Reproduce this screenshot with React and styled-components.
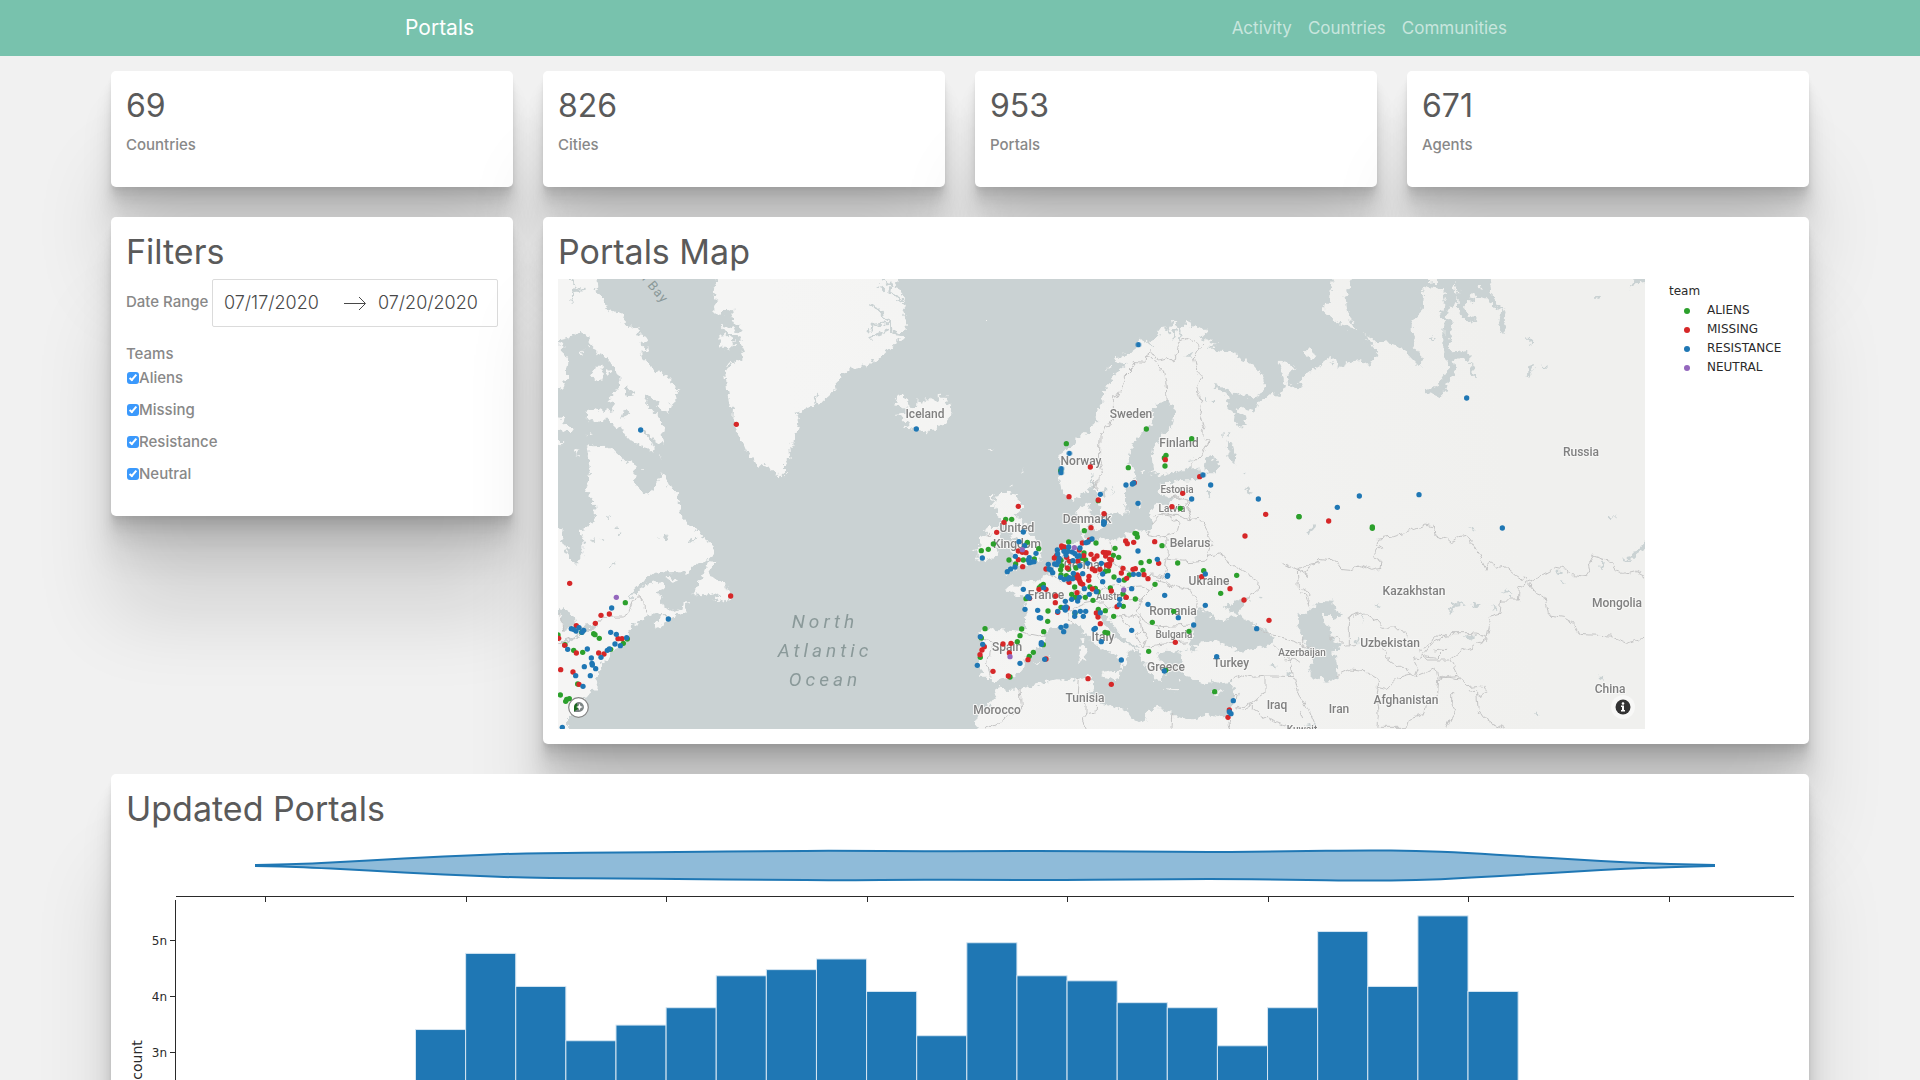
import React from 'react';
import styled, { createGlobalStyle } from 'styled-components';

const GlobalStyle = createGlobalStyle`
  *, *::before, *::after { box-sizing: border-box; }
  body {
    margin: 0;
    background: #f1f1f1;
    color: #888;
    font: 500 15px/24px Inter, "Liberation Sans", sans-serif;
  }
`;

const TEAM_COLORS = {
  ALIENS: '#2ca02c',
  MISSING: '#d62728',
  RESISTANCE: '#1f77b4',
  NEUTRAL: '#9467bd',
};

/* ---------- layout ---------- */

const Header = styled.header`
  background: #78c2ad;
`;

const HeaderInner = styled.div`
  display: flex;
  align-items: center;
  justify-content: space-between;
  max-width: 1140px;
  height: 56px;
  margin: 0 auto;
  padding: 0 15px;
`;

const Brand = styled.a`
  color: #fff;
  font-size: 21px;
  font-weight: 400;
  text-decoration: none;
`;

const Nav = styled.nav`
  display: flex;
`;

const NavLink = styled.a`
  padding: 8px;
  color: rgba(255, 255, 255, 0.6);
  font-size: 17px;
  font-weight: 400;
  text-decoration: none;
`;

const Grid = styled.main`
  display: grid;
  grid-template-columns: repeat(4, minmax(0, 1fr));
  align-items: start;
  gap: 30px;
  margin: 0 5%;
  padding: 15px;
`;

const Card = styled.section`
  grid-column: span ${(p) => p.$span || 1};
  padding: 15px;
  border-radius: 5px;
  background: #fff;
  box-shadow:
    0 3px 2px rgba(0, 0, 0, 0.034),
    0 7px 5px rgba(0, 0, 0, 0.048),
    0 13px 10px rgba(0, 0, 0, 0.06),
    0 22px 18px rgba(0, 0, 0, 0.072),
    0 42px 33px rgba(0, 0, 0, 0.086),
    0 100px 80px rgba(0, 0, 0, 0.12);
`;

const Title = styled.h2`
  margin: 0 0 8px;
  color: #5a5a5a;
  font-size: 34px;
  font-weight: 400;
  line-height: 39px;
`;

const StatValue = styled(Title)`
  font-size: 32px;
`;

const StatLabel = styled.p`
  margin: 0 0 15px;
`;

/* ---------- filters ---------- */

const DateRow = styled.div`
  display: flex;
  margin-bottom: 15px;
`;

const DateLabel = styled.label`
  flex: 1;
  white-space: nowrap;
  line-height: 45px;
`;

const DateBox = styled.div`
  display: flex;
  align-items: center;
  height: 48px;
  border: 1px solid #dbdbdb;
  border-radius: 2px;
  background: #fff;
`;

const DateInput = styled.input`
  width: 130px;
  padding: 0 11px;
  border: 0;
  background: transparent;
  color: #484848;
  font: 300 18px/24px Inter, sans-serif;
`;

const Teams = styled.fieldset`
  display: grid;
  gap: 8px;
  margin: 0 0 15px;
  padding: 0;
  border: 0;
`;

const Legend = styled.legend`
  padding: 0;
`;

const Check = styled.label`
  display: flex;
  align-items: center;
`;

const CheckBox = styled.input`
  display: grid;
  justify-content: center;
  width: 12px;
  height: 12px;
  margin: 0 0 0 1px;
  border-radius: 3px;
  background: #fff;
  box-shadow: inset 0 0 0 1px #bbb;
  appearance: none;
  &:checked {
    background: #3b99fc;
    box-shadow: none;
  }
  &:checked::after {
    content: '';
    width: 4px;
    height: 8px;
    margin-top: 1px;
    border: solid #fff;
    border-width: 0 2px 2px 0;
    transform: rotate(40deg);
  }
`;

/* ---------- map ---------- */

const MapRow = styled.div`
  display: flex;
`;

const MapFrame = styled.div`
  position: relative;
  flex: 1;
  min-width: 0;
  height: 450px;
`;

const MapSvg = styled.svg`
  display: block;
  width: 100%;
  height: 100%;
  background: #cad2d3;
`;

const MapLabel = styled.text`
  fill: #808080;
  stroke: #f7f7f6;
  stroke-width: 2px;
  stroke-linejoin: round;
  paint-order: stroke;
  text-anchor: middle;
  font: 500 ${(p) => (p.$small ? 10 : 12)}px Roboto, sans-serif;
`;

const SeaLabel = styled.text`
  fill: #8a9999;
  text-anchor: middle;
  font: italic 400 19px Roboto, sans-serif;
  letter-spacing: 4px;
`;

const BayLabel = styled.text`
  fill: #8a9999;
  font: 400 13px Roboto, sans-serif;
  letter-spacing: 1px;
`;

const MapLogo = styled.a`
  position: absolute;
  left: 10px;
  bottom: 11px;
  width: 21px;
  height: 21px;
  svg { display: block; }
`;

const InfoButton = styled.button`
  position: absolute;
  right: 10px;
  bottom: 10px;
  width: 24px;
  height: 24px;
  padding: 0;
  border: 0;
  border-radius: 12px;
  background: rgba(255, 255, 255, 0.5);
  svg { display: block; }
`;

const TeamLegend = styled.div`
  width: 149px;
  padding: 3px 0 0 24px;
  color: #2a2a2a;
  font: 12px/19px Verdana, "DejaVu Sans", sans-serif;
`;

const TeamList = styled.ul`
  margin: 0;
  padding: 0 0 0 15px;
  list-style: none;
`;

const TeamItem = styled.li`
  display: flex;
  align-items: center;
  gap: 17px;
  &::before {
    content: '';
    width: 6px;
    height: 6px;
    border-radius: 3px;
    background: ${(p) => p.$color};
  }
`;

/* Every tile is drawn at three units per pixel, from its own origin. */
const TILES = [
  {
    x: 540, y: 210,
    land: [
      '40,190 168,190 172,232 160,238 185,258 195,280 205,298 215,310 228,302 240,306 255,320 250,335 262,352 290,348 300,365 290,375 322,380 325,395 300,398 330,425 305,428 300,440 325,460 345,490 360,483 370,495 392,505 390,522 422,540 405,555 410,572 390,582 385,606 368,600 350,575 320,553 315,580 335,600 358,625 375,660 365,670 370,705 345,690 320,665 300,655 322,680 345,715 340,728 320,710 290,702 270,690 250,668 245,650 225,648 205,630 190,628 165,640 140,625 142,605 165,595 200,602 218,598 225,580 205,565 225,545 240,525 238,505 228,480 210,455 195,440 170,430 160,410 150,400 145,375 115,365 100,375 85,385 40,395',
      '40,400 70,405 68,430 82,455 78,480 82,500 70,530 40,543',
      '165,470 188,470 188,510 170,515 155,497', '195,478 218,486 212,492 198,490',
      '40,620 72,625 75,645 100,655 92,666 70,665 40,652', '40,692 72,694 62,705 40,714',
      '104,713 118,716 112,738 103,725', '136,678 146,674 142,682', '150,666 162,670 150,672',
      '120,430 133,418 126,438', '142,405 150,410 140,412',
      '140,710 150,706 160,712 210,710 235,735 245,740 255,752 285,765 282,815 145,815 150,790 145,765 148,750',
      '366,782 375,795 386,815 355,815', '360,728 364,745 358,738', '306,780 312,782 307,786',
      '525,190 530,225 518,240 530,255 522,268 535,272 530,285 522,290 524,305 535,315 550,310 560,298 568,305 592,290 575,305 570,318 585,322 575,335 600,345 605,365 590,362 570,350 545,348 560,365 585,378 605,385 603,400 615,425 600,430 608,448 590,460 575,455 565,470 555,485 558,510 562,550 570,590 582,600 580,630 590,660 605,690 620,725 640,745 655,770 680,760 695,780 725,800 735,790 735,765 750,740 748,705 765,700 768,665 778,640 770,605 790,600 800,588 840,582 870,555 890,530 900,500 920,480 960,472 1020,445 1060,405 1092,382 1060,378 1100,360 1100,325 1088,300 1095,270 1082,240 1060,232 1075,222 1070,190',
      '538,375 555,372 570,385 585,395 580,410 565,420 540,412',
      '1060,585 1075,580 1065,568 1085,552 1105,570 1105,590 1128,592 1130,567 1145,578 1165,565 1180,572 1195,570 1197,550 1207,560 1220,560 1215,575 1230,583 1238,600 1230,625 1215,642 1200,645 1185,662 1165,662 1150,670 1128,663 1110,655 1088,653 1110,642 1095,635 1080,618 1065,612 1095,608 1098,596',
      '1330,330 1335,330 1335,333 1330,333',
    ],
    water: ['255,525 268,540 282,548 275,560 258,562 256,548', '250,597 265,612 262,622 245,626'],
    fjords: ['88,207 102,216 104,238 96,252 94,278', '104,240 140,236', '985,285 1012,296 1030,318 1052,333 1054,358 1075,376', '1050,338 995,345 991,368', '1045,362 1015,374 988,384', '1015,228 1035,238', '1030,207 1052,225 1048,246 1090,275', '602,388 604,425', '822,580 832,555', '555,330 575,325'],
    dots: { RESISTANCE: '302,660 1129,657', MISSING: '589,643' },
  },
  {
    x: 540, y: 480,
    land: [
      '145,0 285,0 290,20 320,42 345,25 360,0 380,0 390,22 410,40 415,65 422,78 422,108 440,125 445,137 485,155 480,165 495,175 518,190 518,230 495,245 475,250 445,278 400,276 345,278 325,295 300,310 275,335 265,362 285,338 305,325 320,312 345,306 370,310 374,325 345,337 362,345 368,375 385,390 400,397 425,387 428,368 445,366 436,380 446,388 436,398 415,402 390,415 378,425 365,440 350,446 344,428 358,415 375,408 385,402 360,402 340,395 330,408 300,425 280,435 265,455 270,482 245,500 218,515 205,530 190,545 182,560 188,570 165,592 175,605 172,625 150,640 138,655 120,680 95,705 84,715 85,765 40,765 40,140 68,145 66,170 72,205 85,225 108,252 130,225 130,180 115,150 135,145 155,130 165,110 162,70 148,45 135,30',
      '505,243 520,245 516,262 505,275 510,285 525,290 535,302 555,303 560,325 572,340 570,362 560,366 550,358 540,362 520,363 540,350 525,340 490,346 460,343 475,315 485,290',
      '375,290 395,292 415,305 400,308', '75,192 90,203 88,208 76,205',
    ],
    water: [
      '54,385 80,388 88,400 105,410 108,430 90,440 76,447 70,462 66,430 64,408 54,400',
      '110,440 150,435 172,440 160,450 115,450', '58,490 85,475 115,466 120,470 98,480 66,493',
      '355,175 368,172 372,160 384,172 380,178', '445,188 452,178 468,176 450,192', '195,104 210,112 206,118',
      '222,142 236,138 232,147', '148,186 160,174 170,172 160,184', '208,266 220,250 225,252 214,262',
      '110,112 126,104 122,116', '180,176 194,180 184,184', '235,158 246,162 238,167',
    ],
    borders: ['165,436 185,412 250,411 265,402 280,365 290,350 300,357 312,360 313,393 325,410', '54,400 65,412 68,455', '54,492 100,474 160,440'],
    dots: {
      ALIENS: '256,368 161,461 165,464 178,475 101,511 128,517 250,490 262,477 212,508 61,645 80,658 88,656 77,664 125,457 54,465 113,612 75,494',
      MISSING: '89,310 572,348 183,406 208,402 166,430 109,437 74,496 109,519 176,519 192,522 234,476 246,476 62,569 99,576 117,613 56,475',
      RESISTANCE: '215,384 385,417 94,446 100,448 108,453 117,443 126,457 131,451 83,508 142,507 154,534 156,550 157,555 133,560 107,587 151,587 129,619 167,566 183,532 202,511 208,507 225,492 241,497 260,473 212,457 229,463 67,742',
      NEUTRAL: '229,352',
    },
  },
  {
    x: 960, y: 260,
    land: [
      '300,640 306,620 298,605 297,585 320,565 345,555 350,535 372,518 385,522 400,490 412,478 408,460 425,430 430,405 445,375 460,350 480,325 498,312 470,305 462,295 490,292 502,278 520,282 525,262 540,232 548,248 575,240 600,222 592,210 620,205 632,200 648,180 652,200 660,218 668,200 684,183 696,188 692,205 706,196 735,210 740,220 722,235 772,248 758,255 742,262 780,275 825,278 850,300 880,315 905,345 915,375 905,400 880,412 840,405 800,390 765,372 775,390 800,405 808,430 805,450 825,460 822,480 838,500 860,495 855,470 830,448 838,440 885,452 892,430 930,402 960,408 972,380 965,345 970,325 955,305 990,310 1005,330 980,345 985,375 1015,385 1030,375 1030,350 1080,320 1090,760 570,760 580,740 620,738 640,720 625,705 600,702 595,685 620,670 660,660 695,662 730,655 735,640 712,625 690,625 640,640 600,648 580,632 575,590 580,560 605,530 632,498 645,465 643,440 622,427 595,428 580,445 578,488 552,510 540,530 520,545 508,580 505,610 525,630 530,650 520,670 495,690 495,720 497,760 425,760 410,720 402,690 410,660 395,675 370,700 340,720 320,712 305,690 298,660',
      '1035,275 1045,264 1060,268 1066,280 1058,290 1045,297', '355,745 390,728 388,760 352,760',
      '92,708 104,700 100,720 112,728 98,740', '125,712 140,690 148,700 175,705 165,715 190,750 115,750 120,735',
      '188,628 192,635 188,640', '86,568 100,566 92,572', '436,330 446,320 464,322', '540,632 552,632 550,640', '565,640 585,636 575,644', '68,180 74,180 74,182 68,182', '155,676 162,680 156,684',
    ],
    water: [
      '735,600 748,590 770,600 775,615 765,640 745,640 730,625', '800,545 815,550 822,575 830,590 825,612 812,600 802,575',
      '848,634 860,635 858,643 848,642', '855,680 865,682 878,702 870,706', '752,425 762,420 762,432', '782,525 792,522 790,532',
      '676,290 690,278 700,275 690,290', '798,512 808,516 805,530', '735,410 744,415 738,420', '424,690 438,686 442,698 430,714 424,704', '455,690 460,686 452,706', '686,600 698,598 696,603', '740,700 752,704 746,710',
    ],
    fjords: ['620,200 632,222', '640,235 645,205', '575,255 560,242', '660,240 662,215', '395,675 398,640', '765,385 772,370'],
    borders: [
      '410,684 415,655 428,640 418,610 420,530 432,498 450,495 455,480 460,470 460,410 475,405 490,370 490,350 515,325 525,308 555,310 558,285 575,272 595,300 620,293 640,303 652,285 655,245 685,233 710,250 713,268 735,250',
      '555,285 575,290 610,330 618,370 622,425', '715,262 700,285 705,315 722,345 710,380 725,425 720,460 732,500 727,515 750,542 730,580 688,625', '630,715 650,710 680,722 686,750',
    ],
    dots: {
      ALIENS: '319,551 302,632 559,507 695,536 618,586 613,594 615,618 505,623',
      MISSING: '391,621 616,599 719,650',
      RESISTANCE: '535,254 328,580 304,626 303,638 729,645',
    },
  },
  {
    x: 960, y: 480,
    land: [
      '355,85 375,80 392,75 388,100 402,118 385,135 372,155 378,172 400,184 430,172 450,182 490,168 520,150 545,152 562,160 572,150 575,130 570,105 580,75 600,70 625,78 640,60 625,48 600,42 600,15 650,5 700,0 1090,0 1090,765 805,765 805,720 815,690 820,650 825,625 812,606 780,610 750,603 735,615 705,603 690,590 672,585 660,565 668,545 660,518 690,505 725,487 760,483 800,495 840,513 885,507 930,495 940,480 925,455 885,435 845,415 832,398 850,375 870,355 840,358 815,368 790,385 832,400 820,412 785,425 765,412 745,398 725,385 702,395 705,420 695,445 700,465 688,480 685,492 698,504 650,515 620,512 600,520 592,515 600,540 590,535 612,560 628,580 605,582 602,604 585,600 572,578 560,560 545,545 540,515 530,500 500,480 480,462 455,430 440,408 425,402 418,415 430,432 450,450 465,478 500,490 532,512 525,520 500,510 505,540 492,562 482,575 485,545 460,520 430,510 400,490 378,465 358,435 335,430 305,445 270,442 252,462 260,488 240,500 215,520 192,540 195,555 165,588 120,595 100,610 85,590 60,590 65,560 50,550 62,510 65,480 55,460 70,445 110,450 185,455 195,440 200,400 190,350 165,345 135,325 150,318 185,322 190,303 225,310 250,290 270,282 280,270 300,240 285,220 300,195 330,188 350,185 372,188 365,160 360,140 355,110',
      '45,765 50,710 75,690 105,650 115,620 140,630 180,628 230,612 290,598 340,600 385,585 400,592 392,610 402,625 385,640 400,650 420,670 450,678 500,692 515,715 540,728 555,720 560,695 590,680 640,705 700,718 740,705 805,718 805,765',
      '400,128 425,120 430,145 408,155',
      '115,40 150,38 145,65 180,60 188,80 160,105 180,115 200,135 205,165 225,175 240,190 252,210 235,235 245,245 205,255 175,262 160,272 135,287 150,265 168,245 145,238 160,220 150,210 168,200 175,180 152,170 158,150 140,140 130,120 112,108 105,80',
      '60,190 60,172 85,165 75,152 90,138 110,138 125,160 118,190 112,225 90,235 65,243 40,236 55,222 42,210 65,202',
      '425,580 450,574 482,572 470,602 430,590', '360,500 375,497 378,540 358,548', '366,464 374,472 370,492 360,484', '615,625 655,628 652,634 618,631', '752,640 795,624 780,640 765,646', '225,545 238,542 232,550', '265,525 275,528 268,532', '655,595 662,598 658,606', '500,95 505,85 502,105', '535,75 545,62 540,88',
    ],
    water: [
      '742,40 752,38 748,48', '850,32 860,22 858,35', '1040,165 1052,145 1065,132 1060,145 1046,165', '935,555 945,555 950,565 938,563', '980,570 996,575 990,590 980,585', '338,355 346,350 342,360', '898,350 905,352 898,358', '1035,735 1060,728 1080,745 1070,750 1045,745',
      '690,505 700,500 710,510 695,512', '920,460 930,458 932,465',
    ],
    borders: [
      '60,480 95,485 90,520 85,560 90,590', '185,455 210,465 235,470 260,468',
      '270,280 300,300 330,310 345,325 335,350 320,365 330,390 325,420 340,430', '290,265 310,275 315,300', '310,205 315,240 300,265',
      '450,182 455,215 462,250 420,270 412,290 440,320 415,335 370,345 345,345', '462,252 500,270 540,290 580,285 612,292 570,330 540,318 500,320 470,315 440,322',
      '560,160 615,170 625,215 620,245 612,292', '575,130 600,102 630,108 660,130 655,155 615,170', '580,105 610,100 660,110 690,122 720,118 745,160 755,185 740,232', '630,55 660,50 690,65 685,92 692,120',
      '620,237 680,245 740,240 740,230 790,220 800,245 850,275 895,300 890,340 850,362', '570,330 590,300 650,320 690,330 715,375 700,390', '612,292 640,322', '480,345 500,360 545,355 570,330', '545,355 530,395 560,430 600,440 690,435',
      '330,390 370,372 420,362 445,385 440,405', '345,325 370,345 380,365', '445,385 480,375 500,360', '470,408 510,405 540,415 545,450 530,470', '480,410 500,435 520,460', '530,470 545,500 590,495 640,490 680,485', '545,450 560,470 550,500', '590,440 590,480', '400,0 410,30',
      '355,600 352,640 378,672 378,702 370,712 378,747', '378,702 408,695 410,675', '180,628 185,690 150,700 105,735 75,747', '638,705 636,747', '805,720 812,747',
      '812,606 850,585 880,592 915,588 945,588 1000,590 990,540 960,515 940,495', '915,590 915,640 875,670 830,685', '830,685 850,690 880,672 880,690 940,725 990,745', '885,440 940,468 1000,480 1045,505', '970,540 1000,535 1020,550', '1000,590 1010,630 1035,670 1060,730', '1080,245 1050,250 1012,270 1015,320 1050,340 1045,370',
      '90,155 80,168 95,165', '820,650 835,640 832,660',
    ],
    dots: {
      ALIENS: '137,118 155,118 64,212 85,208 100,192 202,187 236,206 223,237 147,240 167,252 190,240 326,186 408,189 373,152 465,205 460,226 476,232 530,162 532,171 525,160 606,197 653,249 731,272 830,286 782,340 543,248 568,244 549,271 508,285 445,272 462,291 585,313 526,357 489,342 490,379 451,324 414,335 406,325 390,321 399,361 376,352 344,321 335,343 346,352 349,352 343,285 348,264 366,235 372,219 377,240 313,205 303,241 305,257 302,269 303,285 319,287 326,268 250,313 243,318 238,323 198,356 264,393 263,424 251,455 185,447 180,467 172,485 220,517 208,529 75,446 64,474 61,532 150,591 250,494 303,382 345,400 415,388 436,392 461,409 435,457 443,459 577,427 641,394 687,454 566,514 617,571 764,635 661,85 1017,110 415,62 493,300 436,274',
      MISSING: '175,79 132,127 110,157 327,50 415,60 432,101 393,143 367,189 388,180 305,198 313,201 307,203 290,226 286,232 283,234 320,232 329,244 354,243 358,210 371,227 393,223 411,228 402,237 430,217 438,218 446,219 437,228 449,238 454,240 449,252 440,255 447,258 397,267 405,272 420,268 322,264 258,267 352,285 356,292 357,298 360,305 362,310 368,313 350,293 387,289 386,301 327,307 351,338 397,327 454,333 499,352 471,380 409,399 414,411 421,431 287,348 286,368 322,384 293,397 258,328 237,328 209,355 188,260 175,213 187,217 198,218 175,239 497,183 502,191 521,187 584,185 596,250 489,265 484,279 500,295 519,268 526,266 552,284 564,296 668,40 636,80 725,290 810,326 852,360 927,421 917,103 855,168 646,487 384,596 454,613 808,690 804,712 148,519 153,490 129,492 73,500 66,510 60,524 99,574 145,588 204,539 258,537 523,8',
      RESISTANCE: '67,234 190,156 177,185 194,197 166,229 228,220 205,240 215,246 222,245 208,233 208,248 165,261 152,267 142,275 190,328 203,350 208,354 195,388 233,391 238,413 242,414 251,323 316,364 335,358 353,363 358,352 388,343 373,326 409,335 292,210 293,222 298,235 295,245 284,252 290,254 265,253 267,267 273,270 278,278 302,292 312,298 324,297 328,293 340,280 338,296 368,281 360,257 383,250 424,250 428,282 428,305 477,301 520,283 536,283 515,326 479,358 478,374 515,451 564,373 614,346 623,286 622,289 592,238 534,213 360,204 326,201 325,214 337,216 345,221 352,229 358,227 339,242 378,188 384,186 396,177 431,125 431,133 433,128 421,43 498,15 517,12 521,9 534,70 695,57 752,15 736,282 736,376 655,413 701,435 770,530 820,662 808,695 813,701 613,573 484,540 424,485 402,448 406,445 344,409 370,409 345,397 361,394 377,394 421,398 293,394 318,381 312,384 316,390 303,442 318,438 311,455 244,488 244,493 254,538 180,550 61,470 68,493 52,556 890,446 895,57 318,225 312,214',
      NEUTRAL: '187,209 343,203 491,330 150,530',
    },
  },
  {
    x: 1300, y: 260,
    land: [
      '0,380 10,350 30,335 60,318 90,295 108,292 112,318 125,320 150,305 180,300 200,310 208,318 215,300 232,285 225,262 215,250 200,240 193,218 215,235 225,245 270,248 300,262 330,290 360,322 370,295 350,270 336,260 345,230 335,210 335,190 345,170 365,150 370,90 380,80 430,88 432,110 438,130 420,160 435,185 430,205 430,290 447,305 440,335 420,365 412,380 375,388 375,396 400,404 420,408 435,390 440,370 465,350 468,325 460,300 480,290 498,296 510,305 512,340 518,350 537,350 524,342 522,318 508,305 508,285 492,274 478,278 455,280 445,258 450,235 460,212 455,185 440,165 448,140 470,130 475,105 460,85 462,68 474,90 478,160 500,180 530,187 520,172 500,165 492,140 505,122 525,130 528,118 508,112 520,100 535,110 560,115 578,138 605,150 600,175 596,190 608,225 620,215 612,190 620,155 600,142 592,128 575,105 568,40 1060,40 1060,760 0,760',
      '105,40 158,40 150,75 145,90 137,110 140,140 150,180 172,208 150,205 110,190 98,182 90,168 72,152 75,125 90,125 92,90', '15,280 25,262 47,277 35,295 20,295', '387,40 412,40 410,68 387,72', '535,85 544,72 548,90', '362,86 378,78 376,90',
    ],
    water: ['1005,50 1045,50 1045,65 1005,70 992,90', '885,108 900,112 896,120 886,119', '684,232 694,234 692,262 686,245', '688,320 706,318 694,340 682,353', '725,317 741,318 735,324', '388,232 398,226 405,238 400,240', '88,310 100,305 96,318'],
    borders: [],
    dots: { RESISTANCE: '500,414' },
  },
  {
    x: 1300, y: 480,
    land: ['0,0 1060,0 1060,770 0,770'],
    water: [
      '-10,405 20,398 40,378 60,362 100,365 103,388 125,400 122,410 108,412 100,424 95,405 66,405 68,425 90,440 95,470 105,480 125,490 120,510 98,510 110,545 113,597 80,602 35,592 25,565 38,540 20,500 8,465 -5,440',
      '963,240 990,235 1010,210 1040,175 1040,203 1015,220 990,243 970,245', '445,390 458,372 495,366 498,373 470,378 458,385 454,405 446,402', '510,372 542,370 540,378 528,381', '492,473 525,465 520,474 508,480',
      '578,376 590,380 594,390 586,393', '215,373 240,378 232,383', '608,330 625,333 638,342 625,342', '765,272 783,272 776,285', '904,243 912,250 906,270 901,266', '510,146 525,146 515,156', '925,112 948,108 930,118', '186,403 194,410 188,425', '167,480 178,476 178,490 166,490', '778,303 792,306 784,311', '705,698 716,698 714,705 706,704', '893,590 910,590 908,602 898,598', '18,160 30,145 44,132 40,142 26,162',
    ],
    borders: [
      '-60,245 0,275 18,288 30,262 60,238 85,242 105,240 120,265 150,268 185,255 215,268 240,262 243,245 218,232 235,205 250,200 235,190 235,178 275,170 300,162 340,148 375,132 400,138 405,165 440,175 455,188 480,170 500,165 520,190 558,265 570,250 590,262 615,260 650,290 665,300 672,290 682,304 720,290 770,262 800,268 805,282 860,290 870,275 865,250 880,228 935,245 945,275 970,280 1000,272 1035,290',
      '685,308 710,340 735,350 745,405 790,412 820,430 838,463 930,468 980,490 1035,472', '682,304 655,325 652,360 605,360 600,400 558,412 568,440 560,478 530,495 490,510 450,540 465,565 472,590',
      '562,472 520,458 455,458 448,468 405,465 395,485 360,510', '148,497 148,410 190,398 225,420 248,445 300,443 318,465 320,480', '248,505 260,530 300,560 328,572 330,582',
      '112,585 150,567 190,572 235,600 235,622 260,628 300,590 330,582 345,590 355,565 342,540 365,525 385,540 445,540', '235,622 230,660 235,710 230,742 320,742 325,715 375,700 380,665 410,640 413,600 472,590 500,620 550,615 560,635 530,650 530,635 505,632', '350,590 375,580 405,563 410,595 470,586', '413,600 440,593 480,600', '370,520 385,500 405,485 440,470', '375,530 410,535 440,505 400,510', '455,640 455,665 470,690 455,715 440,745', '530,645 535,690 550,712 575,730 615,745', '88,475 115,475 135,498 165,497', '0,340 15,345 28,378', '0,500 15,490 10,475', '0,690 12,720',
    ],
    dots: { ALIENS: '217,141 217,145 -3,110', MISSING: '86,123', RESISTANCE: '178,48 357,44 112,82 607,144' },
  },
];

const MAP_LABELS = [
  ['Iceland', 925, 418], ['Sweden', 1131, 418], ['Finland', 1179, 447], ['Norway', 1081, 465],
  ['Estonia', 1177, 493, 1], ['Latvia', 1172, 512, 1], ['Denmark', 1087, 523], ['United', 1017, 532],
  ['Kingdom', 1017, 548], ['Belarus', 1190, 547], ['Ukraine', 1209, 585], ['Germany', 1088, 569],
  ['France', 1046, 599], ['Austria', 1112, 600, 1], ['Romania', 1173, 615], ['Bulgaria', 1174, 638, 1],
  ['Italy', 1103, 641], ['Spain', 1007, 651], ['Greece', 1166, 671], ['Turkey', 1231, 667],
  ['Tunisia', 1085, 702], ['Morocco', 997, 714], ['Iraq', 1277, 709], ['Kuwait', 1302, 733, 1],
  ['Azerbaijan', 1302, 656, 1], ['Russia', 1581, 456], ['Kazakhstan', 1414, 595], ['Mongolia', 1617, 607],
  ['Uzbekistan', 1390, 647], ['Iran', 1339, 713], ['Afghanistan', 1406, 704], ['China', 1610, 693],
];

const place = (t) => `translate(${t.x} ${t.y}) scale(${1 / 3})`;

function PortalsMap() {
  return (
    <MapSvg viewBox="558 279 1087 450" preserveAspectRatio="xMidYMid slice" role="img" aria-label="Portals by team">
      <defs>
        <linearGradient id="land" gradientUnits="userSpaceOnUse" x1="800" y1="500" x2="1500" y2="400">
          <stop offset="0" stopColor="#f5f5f4" />
          <stop offset="1" stopColor="#f0f0ee" />
        </linearGradient>
        <filter id="rough" filterUnits="userSpaceOnUse" x="548" y="269" width="1107" height="470" colorInterpolationFilters="sRGB">
          <feTurbulence type="fractalNoise" baseFrequency="0.2" numOctaves="2" seed="4" result="noise" />
          <feDisplacementMap in="SourceGraphic" in2="noise" scale="9" xChannelSelector="R" yChannelSelector="G" />
        </filter>
        <filter id="wobble" filterUnits="userSpaceOnUse" x="548" y="269" width="1107" height="470" colorInterpolationFilters="sRGB">
          <feTurbulence type="fractalNoise" baseFrequency="0.12" numOctaves="2" seed="9" result="noise" />
          <feDisplacementMap in="SourceGraphic" in2="noise" scale="8" xChannelSelector="R" yChannelSelector="G" />
        </filter>
        <mask id="coast" maskUnits="userSpaceOnUse" x="548" y="269" width="1107" height="470">
          <g filter="url(#rough)">
            {TILES.map((t, i) => (
              <g key={i} transform={place(t)} fill="#fff">
                {t.land.map((p) => <polygon key={p} points={p} />)}
              </g>
            ))}
            {TILES.map((t, i) => (
              <g key={i} transform={place(t)}>
                {t.water.map((p) => <polygon key={p} points={p} fill="#000" />)}
                {(t.fjords || []).map((p) => <polyline key={p} points={p} fill="none" stroke="#000" strokeWidth="6" />)}
              </g>
            ))}
          </g>
        </mask>
      </defs>
      <rect x="558" y="279" width="1087" height="450" fill="url(#land)" mask="url(#coast)" />
      <g filter="url(#wobble)">
        {TILES.map((t, i) => (
          <g key={i} transform={place(t)}>
            {(t.borders || []).map((p) => <polyline key={p} points={p} fill="none" stroke="#c4c4c4" strokeWidth="3" strokeLinejoin="round" />)}
          </g>
        ))}
      </g>
      {MAP_LABELS.map(([name, x, y, small]) => (
        <MapLabel key={name} x={x} y={y} $small={small}>{name}</MapLabel>
      ))}
      <SeaLabel x="825" y="628">North</SeaLabel>
      <SeaLabel x="825" y="657">Atlantic</SeaLabel>
      <SeaLabel x="825" y="686">Ocean</SeaLabel>
      <BayLabel transform="translate(639 276) rotate(50)">n Bay</BayLabel>
      {Object.entries(TEAM_COLORS).map(([team, color]) => TILES.map((t, i) => (
        <g key={team + i} transform={place(t)} fill={color}>
          {(t.dots[team] || '').split(' ').filter(Boolean).map((d, n) => {
            const [cx, cy] = d.split(',');
            return <circle key={n} cx={cx} cy={cy} r="8" />;
          })}
        </g>
      )))}
    </MapSvg>
  );
}

/* ---------- updates chart ---------- */

const ChartSvg = styled.svg`
  display: block;
  width: 100%;
  height: auto;
  font: 12px Verdana, "DejaVu Sans", sans-serif;
`;

const Axis = styled.path`
  fill: none;
  stroke: #2a2a2a;
  stroke-width: 1px;
  shape-rendering: crispEdges;
`;

const AxisText = styled.text`
  fill: #2a2a2a;
  font-size: ${(p) => p.$size || 12}px;
  text-anchor: ${(p) => p.$anchor || 'end'};
`;

const COUNTS = [3.41, 4.77, 4.18, 3.21, 3.49, 3.8, 4.37, 4.48, 4.67, 4.09, 3.3, 4.96, 4.37, 4.28, 3.89, 3.8, 3.12, 3.8, 5.16, 4.18, 5.44, 4.09];

const DENSITY = [
  [130, 0.5], [155, 0.8], [185, 2], [225, 4], [260, 6], [295, 7.8], [340, 10], [380, 11.6], [420, 12.5],
  [495, 13], [560, 13.7], [640, 14.5], [720, 14.7], [790, 14.2], [860, 14.5], [930, 14.7], [1005, 14],
  [1090, 13.4], [1160, 14.2], [1240, 15.2], [1290, 14.6], [1340, 12.7], [1400, 9], [1450, 5.8], [1500, 3.2], [1545, 1.5], [1588, 0.5],
];

const BASE = 384;
const UNIT = 56;
const MID = 29.5;

function smooth(points) {
  let d = '';
  for (let i = 1; i < points.length - 1; i += 1) {
    const [x, y] = points[i];
    const [nx, ny] = points[i + 1];
    d += ` Q${x} ${y} ${(x + nx) / 2} ${(y + ny) / 2}`;
  }
  return `${d} L${points[points.length - 1].join(' ')}`;
}

function UpdatesChart() {
  const top = DENSITY.map(([x, h]) => [x, MID - h]);
  const bottom = DENSITY.map(([x, h]) => [x, MID + h]).reverse();
  const ticks = [0, 1, 2, 3, 4, 5, 6, 7].map((n) => 139.5 + n * 200.5);
  return (
    <ChartSvg viewBox="0 0 1668 450" role="img" aria-label="Updated portals histogram">
      <path
        d={`M${top[0].join(' ')}${smooth(top)} L${bottom[0].join(' ')}${smooth(bottom)} Z`}
        fill="#1f77b4" fillOpacity="0.5" stroke="#1f77b4" strokeWidth="2"
      />
      {COUNTS.map((v, n) => (
        <rect
          key={n} x={289.5 + n * 50.12} y={BASE + 0.5 - v * UNIT} width="50.12" height={v * UNIT}
          fill="#1f77b4" stroke="#d6e6f2" strokeWidth="1"
        />
      ))}
      <Axis d={`M50 60.5H1668 M49.5 64V${BASE}H1668`} />
      <Axis d={ticks.map((x) => `M${x} 61v5`).join(' ')} />
      {[0, 1, 2, 3, 4, 5].map((n) => (
        <g key={n}>
          <Axis d={`M44 ${BASE + 0.5 - n * UNIT}h5`} />
          <AxisText x="41" y={BASE + 5 - n * UNIT}>{n ? `${n}n` : '0'}</AxisText>
        </g>
      ))}
      <AxisText $size={14} $anchor="middle" transform={`translate(16 ${BASE - 160}) rotate(-90)`}>count</AxisText>
    </ChartSvg>
  );
}

/* ---------- page ---------- */

const STATS = [['69', 'Countries'], ['826', 'Cities'], ['953', 'Portals'], ['671', 'Agents']];

export default function App() {
  return (
    <>
      <GlobalStyle />
      <Header>
        <HeaderInner>
          <Brand href="#">Portals</Brand>
          <Nav>
            <NavLink href="#activity">Activity</NavLink>
            <NavLink href="#countries">Countries</NavLink>
            <NavLink href="#communities">Communities</NavLink>
          </Nav>
        </HeaderInner>
      </Header>
      <Grid>
        {STATS.map(([value, label]) => (
          <Card key={label}>
            <StatValue>{value}</StatValue>
            <StatLabel>{label}</StatLabel>
          </Card>
        ))}
        <Card>
          <Title>Filters</Title>
          <DateRow>
            <DateLabel htmlFor="start">Date Range</DateLabel>
            <DateBox>
              <DateInput id="start" defaultValue="07/17/2020" />
              <svg width="24" height="24" viewBox="0 0 24 24" fill="none" stroke="#484848" strokeWidth="1" aria-hidden="true">
                <path d="M1 12.500H22M16 6l6.500 6.500L16 19" />
              </svg>
              <DateInput aria-label="End date" defaultValue="07/20/2020" />
            </DateBox>
          </DateRow>
          <Teams>
            <Legend>Teams</Legend>
            {['Aliens', 'Missing', 'Resistance', 'Neutral'].map((team) => (
              <Check key={team}>
                <CheckBox type="checkbox" defaultChecked />
                {team}
              </Check>
            ))}
          </Teams>
        </Card>
        <Card $span={3}>
          <Title>Portals Map</Title>
          <MapRow>
            <MapFrame>
              <PortalsMap />
              <MapLogo href="#map" aria-label="Map provider">
                <svg width="21" height="21" viewBox="0 0 21 21">
                  <circle cx="10.500" cy="10.500" r="9.800" fill="#fff" stroke="#858585" strokeWidth="1.200" />
                  <path d="M6 15V9.500a5 5 0 1 1 5 5.500Z" fill="#7d8585" />
                  <path d="M6 14.500V9.500a5 5 0 0 1 3-3.500l1 6Z" fill="#1b6b1f" />
                  <path d="M11.500 6.500l1 2.500 2.500 1-2.500 1-1 2.500-1-2.500L8 10l2.500-1Z" fill="#fff" />
                </svg>
              </MapLogo>
              <InfoButton type="button" aria-label="Toggle attribution">
                <svg width="24" height="24" viewBox="0 0 24 24">
                  <circle cx="12" cy="12" r="7.500" fill="#333" />
                  <circle cx="12" cy="8.500" r="1.300" fill="#fff" />
                  <path d="M10 10.500h3v4.500h1v1.500h-4V15h1v-3h-1Z" fill="#fff" />
                </svg>
              </InfoButton>
            </MapFrame>
            <TeamLegend>
              team
              <TeamList>
                {Object.entries(TEAM_COLORS).map(([team, color]) => (
                  <TeamItem key={team} $color={color}>{team}</TeamItem>
                ))}
              </TeamList>
            </TeamLegend>
          </MapRow>
        </Card>
        <Card $span={4}>
          <Title>Updated Portals</Title>
          <UpdatesChart />
        </Card>
      </Grid>
    </>
  );
}
